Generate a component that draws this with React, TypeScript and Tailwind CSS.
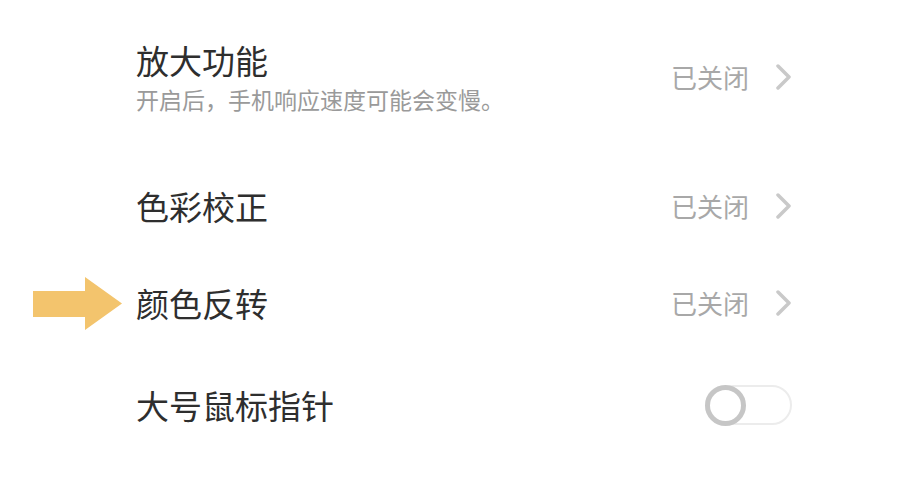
import { ReactNode } from 'react'

const font = { fontFamily: '"Noto Sans CJK SC", "Noto Sans", sans-serif' }

function Chevron() {
  return (
    <svg width="16" height="26" viewBox="0 0 16 26" className="ml-[27px] shrink-0">
      <polyline
        points="2,2 13,13 2,24"
        fill="none"
        stroke="#c9c9c9"
        strokeWidth="3.5"
        strokeLinecap="round"
        strokeLinejoin="round"
      />
    </svg>
  )
}

function Value({ children }: { children: ReactNode }) {
  return (
    <div className="flex items-center">
      <span className="text-[26px] leading-[32px] text-[#a8a8a8]">{children}</span>
      <Chevron />
    </div>
  )
}

function Toggle() {
  return (
    <div className="relative h-[40px] w-[87px] rounded-full border-2 border-[#ececec] bg-white">
      <div className="absolute -left-[2px] -top-[2px] h-[41px] w-[41px] rounded-full border-[5px] border-[#c6c6c6] bg-white" />
    </div>
  )
}

function Row({
  height,
  title,
  sub,
  right
}: {
  height: string
  title: string
  sub?: string
  right: ReactNode
}) {
  return (
    <div className={`flex items-center justify-between pl-[136px] pr-[126px] ${height}`}>
      <div className="flex flex-col">
        <span className="text-[33px] leading-[40px] text-[#2e2e2e]">{title}</span>
        {sub && (
          <span className="mt-[4px] text-[23px] leading-[30px] text-[#9a9a9a]">{sub}</span>
        )}
      </div>
      {right}
    </div>
  )
}

export default function App() {
  return (
    <div className="relative h-[489px] w-[918px] overflow-hidden bg-white" style={font}>
      <div className="flex flex-col">
        <Row
          height="h-[154px]"
          title="放大功能"
          sub="开启后，手机响应速度可能会变慢。"
          right={<Value>已关闭</Value>}
        />
        <Row height="h-[104px]" title="色彩校正" right={<Value>已关闭</Value>} />
        <Row height="h-[90px]" title="颜色反转" right={<Value>已关闭</Value>} />
        <Row height="h-[114px]" title="大号鼠标指针" right={<Toggle />} />
      </div>

      <svg
        width="90"
        height="56"
        viewBox="0 0 90 56"
        className="absolute left-[33px] top-[276px]"
      >
        <polygon points="0,15 52,15 52,1 89,27.5 52,54 52,41 0,41" fill="#F3C46D" />
      </svg>
    </div>
  )
}
